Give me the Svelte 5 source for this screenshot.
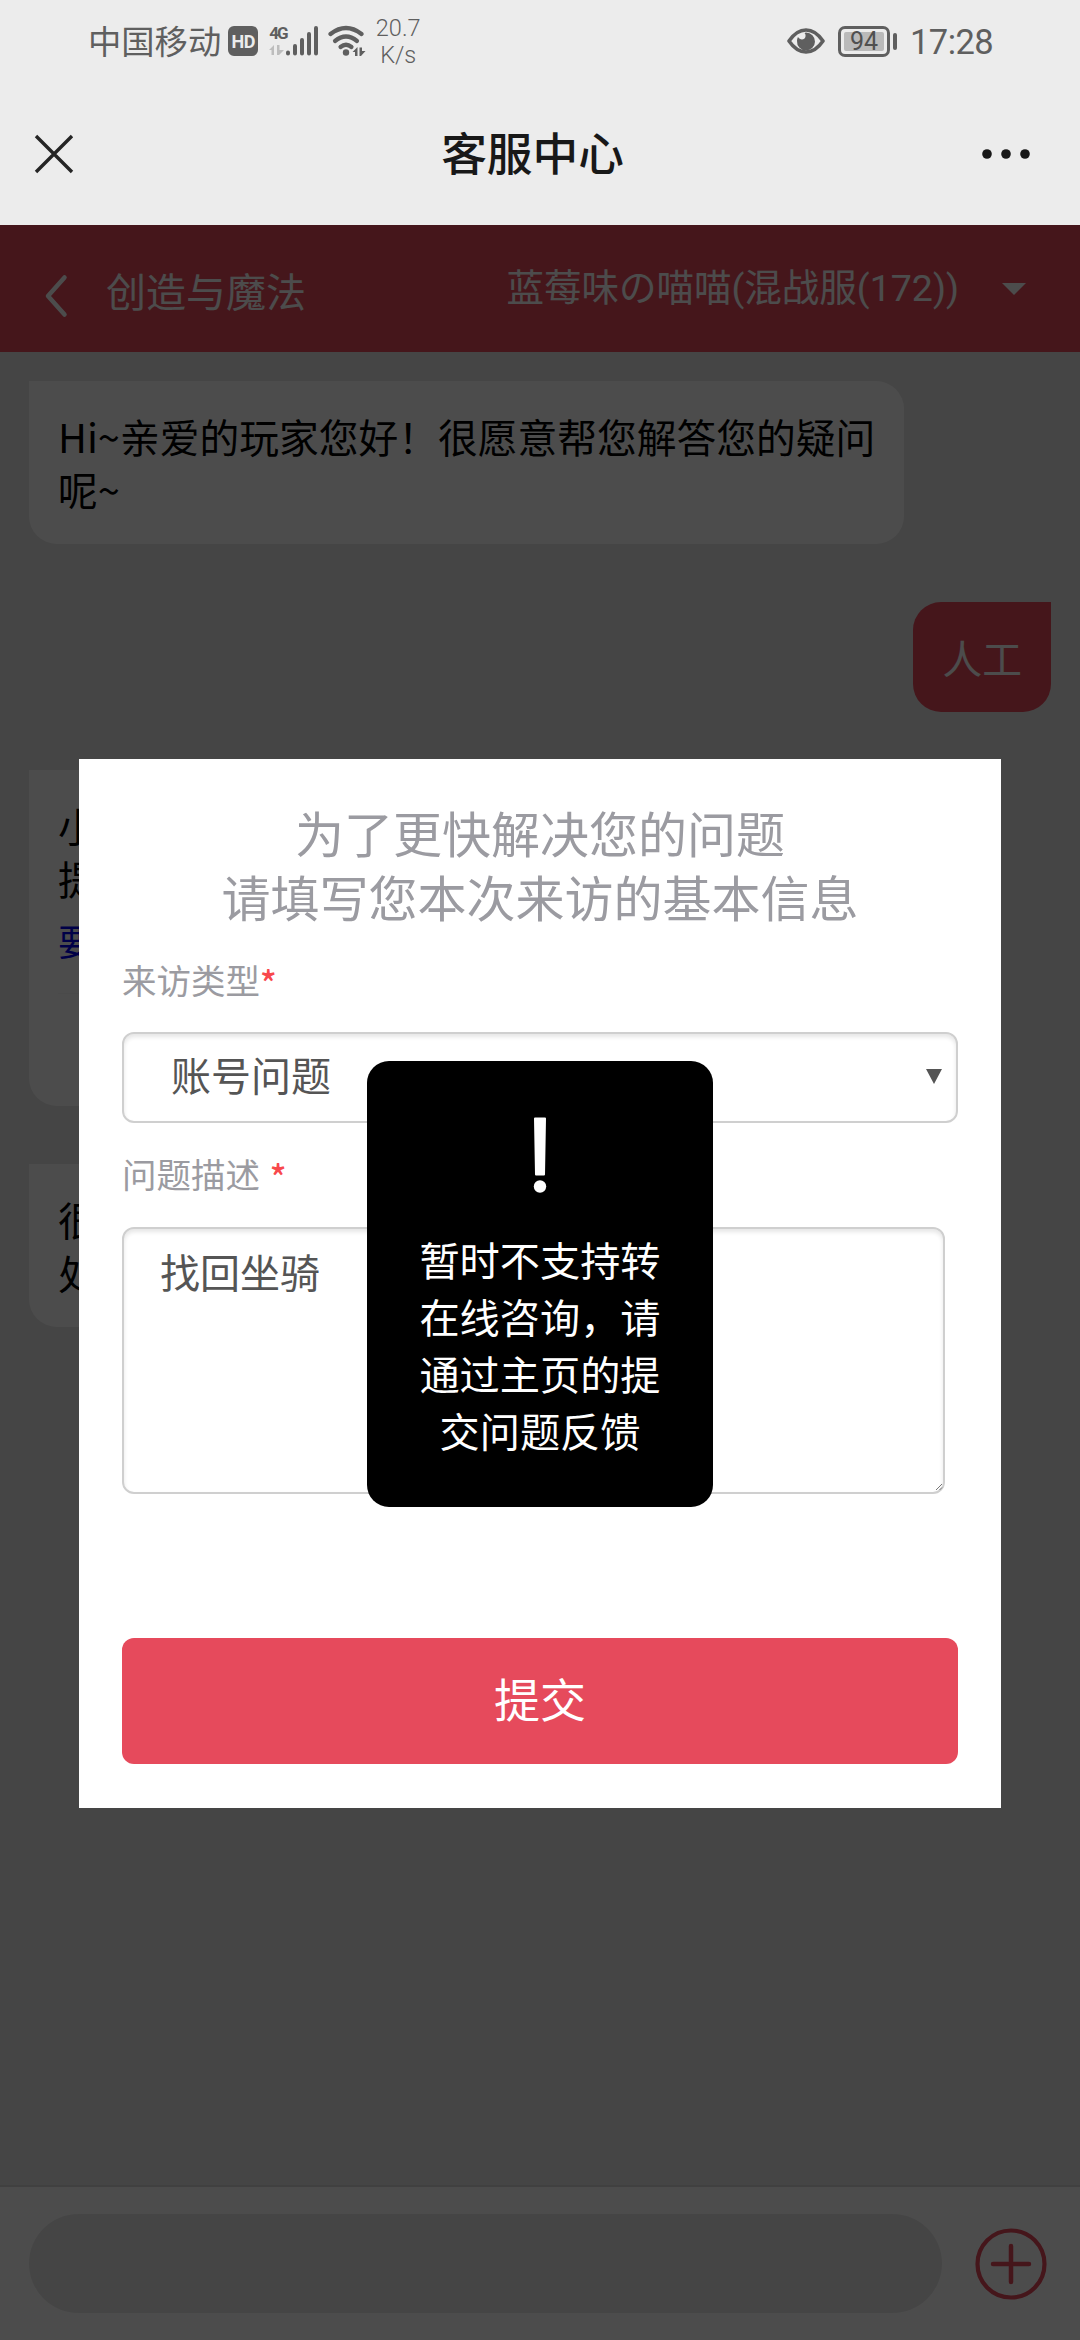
<script lang="ts">
    interface Message {
        id: number;
        from: 'service' | 'user';
        lines: string[];
        link?: string;
    }

    const messages: Message[] = [
        { id: 1, from: 'service', lines: ['Hi~亲爱的玩家您好！很愿意帮您解答您的疑问', '呢~'] },
        { id: 2, from: 'user', lines: ['人工'] },
        { id: 3, from: 'service', lines: ['小', '提'], link: '要' },
        { id: 4, from: 'service', lines: ['很', '处'] }
    ];

    const toastLines = ['暂时不支持转', '在线咨询，请', '通过主页的提', '交问题反馈'];

    let visitType = '账号问题';
    let description = '找回坐骑';
    let draft = '';
</script>

<div class="screen">
    <div class="status-bar">
        <div class="status-left">
            <span class="carrier">中国移动</span>
            <span class="hd">HD</span>
            <div class="network">
                <span class="generation">4G</span>
                <svg class="signal" width="50" height="32" viewBox="0 0 50 32">
                    <g fill="#bdbdbd">
                        <path d="M0 25l5-5v10H2.500v-5z" />
                        <path d="M8 20h2.500v5H15l-5 5H8z" />
                    </g>
                    <g stroke="#5f5f5f" stroke-width="4" stroke-linecap="round">
                        <path d="M19 27.500v1M26 21v7.500M33 15v13.500M40 9v19.500M47 3v25.500" />
                    </g>
                </svg>
            </div>
            <svg class="wifi" width="38" height="32" viewBox="0 0 38 32">
                <g fill="none" stroke="#5f5f5f" stroke-width="4.200" stroke-linecap="round">
                    <path d="M2.500 9Q18 -3 33.500 9" />
                    <path d="M7 16Q18 7 29 16" />
                    <path d="M12.500 22Q18 17.500 23.500 22" />
                </g>
                <circle cx="18" cy="27.500" r="3.200" fill="#5f5f5f" />
                <path d="M24.500 27l5-5v9H27v-4zM31.500 22.500H34V26h3.500L33 31h-1.500z" fill="#5f5f5f" />
            </svg>
            <div class="speed">
                <span>20.7</span>
                <span>K/s</span>
            </div>
        </div>
        <div class="status-right">
            <svg width="38" height="26" viewBox="0 0 38 26">
                <path d="M2 13Q9.500 2 19 2t17 11Q28.500 24 19 24T2 13z" fill="none" stroke="#5f5f5f" stroke-width="3.600" stroke-linejoin="round" />
                <path d="M19 4.500a9 9 0 1 1-9 8.500c0-2 .5-3 1-4 2 3.500 7 3 7.500-.500.200-1.500 0-2.500-1-3.500z" fill="#5f5f5f" />
            </svg>
            <div class="battery">
                <span class="level">94</span>
            </div>
            <span class="time">17:28</span>
        </div>
    </div>

    <div class="nav-bar">
        <svg class="close" width="40" height="40" viewBox="0 0 40 40">
            <path d="M2 2l36 36M38 2L2 38" stroke="#252525" stroke-width="3.400" />
        </svg>
        <h1>客服中心</h1>
        <svg class="more" width="50" height="12" viewBox="0 0 50 12" fill="#181818">
            <circle cx="6" cy="6" r="4.800" />
            <circle cx="25" cy="6" r="4.800" />
            <circle cx="44" cy="6" r="4.800" />
        </svg>
    </div>

    <div class="page">
        <header class="game-header">
            <svg width="24" height="44" viewBox="0 0 24 44">
                <path d="M20.500 3.500L4 22l16.500 18.500" fill="none" stroke="#fff" stroke-width="4.500" stroke-linecap="round" stroke-linejoin="round" />
            </svg>
            <span class="game">创造与魔法</span>
            <span class="role">蓝莓味の喵喵(混战服(172))</span>
            <i class="caret"></i>
        </header>

        <div class="messages">
            {#each messages as message (message.id)}
                <div class="bubble {message.from}" class:with-link={message.link}>
                    {#each message.lines as line}
                        <p>{line}</p>
                    {/each}
                    {#if message.link}
                        <p class="link">{message.link}</p>
                    {/if}
                </div>
            {/each}
        </div>

        <footer class="input-bar">
            <input type="text" bind:value={draft} />
            <svg width="72" height="72" viewBox="0 0 72 72" fill="none" stroke="#e64a5c">
                <circle cx="36" cy="36" r="33.500" stroke-width="4.200" />
                <path d="M36 18v36M18 36h36" stroke-width="4.500" stroke-linecap="round" />
            </svg>
        </footer>

        <div class="mask">
            <form class="modal">
                <h2>为了更快解决您的问题<br />请填写您本次来访的基本信息</h2>
                <span class="label">来访类型<b>*</b></span>
                <div class="select">
                    <span>{visitType}</span>
                    <i></i>
                </div>
                <span class="label second">问题描述 <b>*</b></span>
                <div class="textarea">
                    <textarea bind:value={description}></textarea>
                    <svg class="grip" width="8" height="8" viewBox="0 0 8 8">
                        <path d="M1 7l6-6M4.500 7L7 4.500" stroke="#777" stroke-width="1" />
                    </svg>
                </div>
                <button type="button">提交</button>
            </form>
        </div>

        <div class="toast-layer">
            <div class="toast">
                <svg width="14" height="76" viewBox="0 0 14 76" fill="#fff">
                    <path d="M1 1.500Q1 .5 2 .5h10q1 0 1 1L12 57.500q0 1-1 1H3q-1 0-1-1z" />
                    <circle cx="7" cy="69.500" r="6.200" />
                </svg>
                {#each toastLines as line}
                    <p>{line}</p>
                {/each}
            </div>
        </div>
    </div>
</div>

<style>
    :global(body) {
        margin: 0;
        background: #ececec;
    }

    .screen {
        width: 1080px;
        height: 2340px;
        display: flex;
        flex-direction: column;
        overflow: hidden;
        font-family: Roboto, "Noto Sans CJK SC", sans-serif;
    }

    p,
    h1,
    h2 {
        margin: 0;
        font-weight: 400;
    }

    .status-bar {
        height: 82px;
        padding: 0 87px 0 88px;
        display: flex;
        justify-content: space-between;
        align-items: center;
        color: #5f5f5f;
    }

    .status-left,
    .status-right {
        display: flex;
        align-items: center;
    }

    .carrier {
        padding-top: 3px;
        font-size: 33.300px;
        line-height: 40px;
    }

    .hd {
        width: 30px;
        height: 30px;
        margin-left: 7px;
        border-radius: 6px;
        background: #5f5f5f;
        color: #ececec;
        font-size: 18px;
        line-height: 31px;
        font-weight: 700;
        text-align: center;
        letter-spacing: -.5px;
    }

    .network {
        position: relative;
        height: 32px;
        margin-left: 11px;
    }

    .generation {
        position: absolute;
        left: 0;
        top: -3px;
        font-size: 17px;
        line-height: 22px;
        font-weight: 700;
        letter-spacing: -2px;
    }

    .wifi {
        margin-left: 9px;
    }

    .speed {
        width: 46px;
        margin-left: 9px;
        padding-top: 2px;
        display: flex;
        flex-direction: column;
        align-items: center;
        font-size: 23.500px;
        line-height: 27px;
        font-weight: 300;
    }

    .battery {
        position: relative;
        width: 46px;
        height: 25px;
        margin-left: 13px;
        border: 3px solid #5f5f5f;
        border-radius: 7px;
        display: flex;
        align-items: center;
        justify-content: center;
    }

    .battery::after {
        content: '';
        position: absolute;
        left: 52px;
        top: 4px;
        width: 4px;
        height: 17px;
        border-radius: 2px;
        background: #5f5f5f;
    }

    .level {
        width: 40px;
        height: 19px;
        border-radius: 2px;
        background: #bababa;
        font-size: 25px;
        line-height: 20px;
        text-align: center;
        color: #505050;
    }

    .time {
        margin-left: 20px;
        padding-top: 1px;
        font-size: 34.500px;
        line-height: 40px;
        letter-spacing: -.6px;
    }

    .nav-bar {
        height: 143px;
        padding: 0 49px 0 34px;
        display: grid;
        grid-template-columns: 60px 1fr 60px;
        align-items: center;
    }

    .nav-bar h1 {
        padding-top: 5px;
        text-align: center;
        font-size: 45.700px;
        line-height: 60px;
        font-weight: 500;
        color: #181818;
    }

    .more {
        justify-self: end;
    }

    .page {
        position: relative;
        flex: 1;
        display: flex;
        flex-direction: column;
        background: #e8e8e8;
    }

    .game-header {
        height: 127px;
        padding: 0 54px 0 44px;
        box-sizing: border-box;
        display: flex;
        align-items: center;
        background: #e64a5c;
        color: #fff;
    }

    .game-header svg {
        margin-top: 15px;
    }

    .game {
        margin-left: 38px;
        padding-top: 10px;
        font-size: 40px;
        line-height: 50px;
    }

    .role {
        margin-left: auto;
        margin-bottom: 1px;
        font-size: 37.500px;
        line-height: 50px;
    }

    .caret {
        margin-left: 43px;
        margin-top: 1px;
        border: 12px solid transparent;
        border-top: 12px solid #fff;
        border-bottom: 0;
    }

    .messages {
        flex: 1;
        padding: 29px 29px 0;
        display: flex;
        flex-direction: column;
        align-items: flex-start;
        gap: 58px;
    }

    .bubble {
        width: 875px;
        box-sizing: border-box;
        padding: 28px 29px 29px;
        border-radius: 0 28px 28px 28px;
        background: #fff;
        color: #000;
        font-family: "Noto Sans CJK SC", sans-serif;
        font-size: 39.750px;
        line-height: 53px;
        white-space: nowrap;
    }

    .bubble.user {
        width: auto;
        align-self: flex-end;
        border-radius: 28px 0 28px 28px;
        background: #e64a5c;
        color: #fff;
    }

    .bubble.with-link {
        height: 336px;
    }

    .link {
        padding: 10px 0 26px;
        border-bottom: 1px solid #f8f8f8;
        font-size: 36px;
        color: #0000ee;
    }

    .input-bar {
        height: 155px;
        padding: 0 33px 0 29px;
        box-sizing: border-box;
        border-top: 2px solid #d5d5d5;
        display: flex;
        align-items: center;
        gap: 33px;
        background: #fff;
    }

    .input-bar input {
        flex: 1;
        height: 99px;
        padding: 0 40px;
        box-sizing: border-box;
        border: 0;
        border-radius: 50px;
        background: #e8e8e8;
        font-size: 40px;
    }

    .mask,
    .toast-layer {
        position: absolute;
        inset: 0;
        display: flex;
        align-items: center;
        justify-content: center;
    }

    .mask {
        background: rgba(0, 0, 0, .7);
    }

    .modal {
        width: 922px;
        height: 1049px;
        margin-top: 2px;
        padding: 46px 43px 0;
        box-sizing: border-box;
        display: flex;
        flex-direction: column;
        background: #fff;
    }

    .modal h2 {
        font-size: 49px;
        line-height: 64px;
        text-align: center;
        color: #9b9ba1;
    }

    .label {
        height: 99px;
        padding-top: 21px;
        box-sizing: border-box;
        font-family: "Noto Sans CJK SC", sans-serif;
        font-size: 34.500px;
        line-height: 50px;
        word-spacing: 2px;
        color: #9b9ba1;
    }

    .label.second {
        height: 104px;
        padding-top: 25px;
    }

    .label b {
        font-weight: 500;
        line-height: 1;
        vertical-align: -3px;
        color: #f8484c;
    }

    .select,
    .textarea {
        box-sizing: border-box;
        border: 2px solid #cfcfcf;
        border-radius: 12px;
        box-shadow: inset 0 3px 4px rgba(0, 0, 0, .1);
    }

    .select {
        height: 91px;
        padding: 0 14px 0 47px;
        display: flex;
        align-items: center;
        justify-content: space-between;
        font-size: 40px;
        color: #555;
    }

    .select span {
        line-height: 50px;
    }

    .select i {
        margin-bottom: 2px;
        border: 8px solid transparent;
        border-top: 15px solid #555;
        border-bottom: 0;
    }

    .textarea {
        position: relative;
        width: 823px;
        height: 267px;
    }

    .textarea textarea {
        width: 100%;
        height: 100%;
        padding: 17px 36px;
        box-sizing: border-box;
        display: block;
        border: 0;
        resize: none;
        outline: 0;
        background: transparent;
        font-family: inherit;
        font-size: 40px;
        line-height: 58px;
        color: #555;
    }

    .grip {
        position: absolute;
        right: 0;
        bottom: 1px;
    }

    .modal button {
        height: 126px;
        margin-top: 144px;
        padding: 0 0 8px;
        border: 0;
        border-radius: 12px;
        background: #e64a5c;
        font-family: inherit;
        font-size: 46px;
        color: #fff;
    }

    .toast {
        width: 346px;
        height: 446px;
        margin-top: 3px;
        padding-top: 56px;
        box-sizing: border-box;
        border-radius: 22px;
        display: flex;
        flex-direction: column;
        align-items: center;
        background: #000;
        color: #fff;
        font-size: 40.200px;
        line-height: 57px;
    }

    .toast svg {
        margin-bottom: 41px;
    }
</style>
